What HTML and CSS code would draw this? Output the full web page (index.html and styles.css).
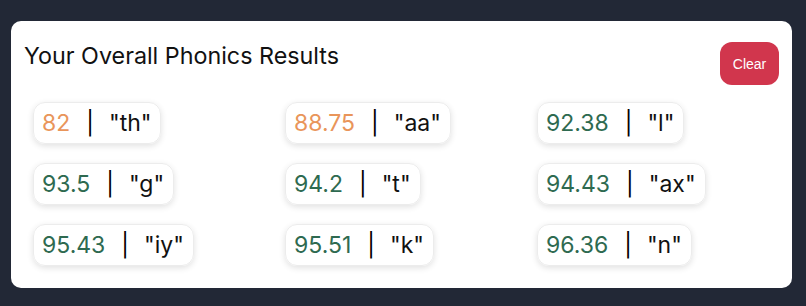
FILE: index.html
```html
<!DOCTYPE html>
<html lang="en">
<head>
    <meta charset="UTF-8">
    <meta name="viewport" content="width=device-width, initial-scale=1.0">
    <title>Phonics Results</title>
    <link rel="stylesheet" href="styles.css">
</head>
<body>
    <div class="card">
        <div class="header">
            <h2>Your Overall Phonics Results</h2>
            <button class="clear-btn">Clear</button>
        </div>
        <div class="results">
            <div class="chip"><span class="score warn">82</span><span class="sep">|</span><span class="phone">"th"</span></div>
            <div class="chip"><span class="score warn">88.75</span><span class="sep">|</span><span class="phone">"aa"</span></div>
            <div class="chip"><span class="score good">92.38</span><span class="sep">|</span><span class="phone">"l"</span></div>
            <div class="chip"><span class="score good">93.5</span><span class="sep">|</span><span class="phone">"g"</span></div>
            <div class="chip"><span class="score good">94.2</span><span class="sep">|</span><span class="phone">"t"</span></div>
            <div class="chip"><span class="score good">94.43</span><span class="sep">|</span><span class="phone">"ax"</span></div>
            <div class="chip"><span class="score good">95.43</span><span class="sep">|</span><span class="phone">"iy"</span></div>
            <div class="chip"><span class="score good">95.51</span><span class="sep">|</span><span class="phone">"k"</span></div>
            <div class="chip"><span class="score good">96.36</span><span class="sep">|</span><span class="phone">"n"</span></div>
        </div>
    </div>
</body>
</html>
```

FILE: styles.css
```css
body {
    margin: 0;
    padding: 21px 14px 19px 11px;
    background-color: #222836;
    font-family: Inter, "Noto Sans", sans-serif;
}

.card {
    background-color: #fff;
    border-radius: 10px;
    padding: 20px 13px 22px 13px;
}

.header {
    display: flex;
    justify-content: space-between;
    align-items: flex-start;
}

.header h2 {
    margin: 0;
    font-size: 23.3px;
    font-weight: 400;
    line-height: 30px;
    color: #111;
}

.clear-btn {
    margin-top: 1px;
    width: 59px;
    height: 43px;
    border: none;
    border-radius: 12px;
    background-color: #d1364d;
    color: #fff;
    font-family: "Liberation Sans", Arial, sans-serif;
    font-size: 14px;
    cursor: pointer;
}

.results {
    display: grid;
    grid-template-columns: repeat(3, 252px);
    row-gap: 19px;
    margin-top: 17px;
    padding-left: 9px;
}

.chip {
    justify-self: start;
    display: inline-flex;
    align-items: center;
    height: 40px;
    padding: 0 9px 0 8px;
    border: 1px solid #ececec;
    border-radius: 12px;
    box-shadow: 0 2px 6px rgba(0, 0, 0, 0.12);
    font-size: 23px;
    color: #111;
}

.score.warn {
    color: #e9955a;
}

.score.good {
    color: #2e6a50;
}

.sep {
    margin: 0 15px 0 16px;
    color: #000;
}
```
